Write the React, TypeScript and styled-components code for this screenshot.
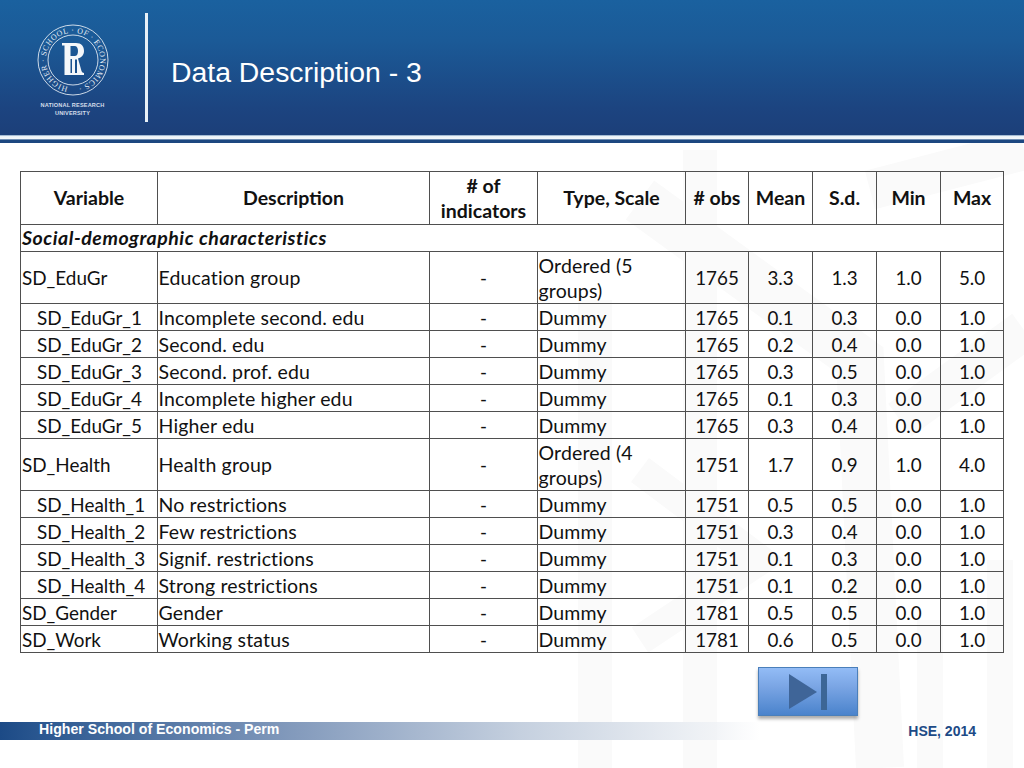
import React from "react";
import styled, { createGlobalStyle } from "styled-components";

const Global = createGlobalStyle`
  html, body { margin: 0; padding: 0; background: #fff; }
  #root { width: 1024px; height: 768px; overflow: hidden; }
`;

const Page = styled.div`
  position: relative;
  width: 1024px;
  height: 768px;
  display: flex;
  flex-direction: column;
  background: #fff;
  overflow: hidden;
`;

const Watermark = styled.svg`
  position: absolute;
  left: 0;
  top: 0;
  width: 1024px;
  height: 768px;
  pointer-events: none;
`;

const Header = styled.header`
  position: relative;
  height: 135px;
  flex: none;
  display: flex;
  align-items: flex-start;
  background: linear-gradient(180deg, #1a619f 0%, #1b5a97 30%, #1c4480 80%, #1c3f79 100%);
`;

const LogoBlock = styled.div`
  width: 145px;
  flex: none;
  display: flex;
  flex-direction: column;
  align-items: center;
  padding-top: 24px;
`;

const LogoCaption = styled.div`
  margin-top: 5px;
  font: bold 5.6px/8px "Liberation Sans", Arial, sans-serif;
  color: #d4deea;
  text-align: center;
  letter-spacing: 0.15px;
`;

const Divider = styled.div`
  width: 3px;
  height: 109px;
  margin-top: 13px;
  flex: none;
  background: #e8f0f7;
`;

const Title = styled.h1`
  margin: 55px 0 0 23px;
  font: normal 28.4px/34px "Liberation Sans", Arial, sans-serif;
  color: #fff;
`;

const HeaderRule = styled.div`
  position: relative;
  height: 8px;
  flex: none;
  background: linear-gradient(180deg, #5f86b0 0, #e9f1f8 1px, #f4f8fb 4px, #6f8fb5 4.5px, #1c4780 5px, #1c4780 100%);
`;

const Main = styled.main`
  position: relative;
  flex: 1;
  display: flex;
  flex-direction: column;
  padding: 28px 20px 0;
`;

const Table = styled.table`
  width: 984px;
  table-layout: fixed;
  border-collapse: collapse;
  font-family: Lato, "Open Sans", sans-serif;
  font-size: 19.5px;
  color: #111;
`;

const Head = styled.th`
  border: 1px solid #4f4f4f;
  padding: 0 2px 1px;
  height: 51px;
  font-weight: 700;
  line-height: 25px;
  text-align: center;
  vertical-align: middle;
`;

const Section = styled.td`
  border: 1px solid #4f4f4f;
  padding: 0 1px 1px;
  height: 25px;
  font-weight: 700;
  font-style: italic;
  line-height: 25px;
  letter-spacing: 0.55px;
`;

const Cell = styled.td<{ $h: number }>`
  border: 1px solid #4f4f4f;
  padding: 0 1px 0 0.5px;
  height: ${p => p.$h}px;
  line-height: 25px;
  text-align: left;
  vertical-align: middle;
  letter-spacing: 0.15px;
`;

const NameCell = styled(Cell)<{ $indent?: boolean }>`
  padding-left: ${p => (p.$indent ? 16 : 1)}px;
  font-size: 18.9px;
  letter-spacing: 0;
  white-space: nowrap;
`;

const NumCell = styled(Cell)`
  padding: 0;
  font-size: 18.8px;
  letter-spacing: 0;
  text-align: center;
`;

const NavRow = styled.div`
  display: flex;
  justify-content: flex-end;
  padding: 14px 146px 0 0;
`;

const NextButton = styled.button`
  width: 100px;
  height: 49px;
  padding: 0;
  border: 1px solid #4a7fba;
  background: linear-gradient(180deg, #93bcf6 0%, #7aa5e4 40%, #4a83cc 100%);
  box-shadow: 0 3px 3px rgba(70, 70, 70, 0.45);
  display: flex;
  align-items: center;
  justify-content: center;
`;

const Footer = styled.footer`
  position: absolute;
  left: 0;
  top: 722px;
  width: 1024px;
  height: 18px;
  display: flex;
  justify-content: space-between;
  align-items: center;
  background: linear-gradient(90deg, #1c4a86 0, #2a5790 40px, #7f97ba 280px, #c5d0df 520px, #eef1f5 700px, rgba(255, 255, 255, 0) 760px);
`;

const FooterLeft = styled.span`
  margin-left: 39px;
  font: bold 14.15px/14px "Liberation Sans", Arial, sans-serif;
  color: #fff;
  position: relative;
  top: -2px;
`;

const FooterRight = styled.span`
  margin-right: 48px;
  font: bold 14px/14px "Liberation Sans", Arial, sans-serif;
  color: #1c4a86;
`;

type Row = { v: string; d: string; t: string; n: string; m: string; s: string; a: string; b: string; indent: boolean; h: number };

const mk = (v: string, d: string, t: string, n: string, m: string, s: string, a: string, b: string, indent = false, h = 26): Row => ({ v, d, t, n, m, s, a, b, indent, h });

const rows: Row[] = [
  mk("SD_EduGr", "Education group", "Ordered (5 groups)", "1765", "3.3", "1.3", "1.0", "5.0", false, 51),
  mk("SD_EduGr_1", "Incomplete second. edu", "Dummy", "1765", "0.1", "0.3", "0.0", "1.0", true),
  mk("SD_EduGr_2", "Second. edu", "Dummy", "1765", "0.2", "0.4", "0.0", "1.0", true),
  mk("SD_EduGr_3", "Second. prof. edu", "Dummy", "1765", "0.3", "0.5", "0.0", "1.0", true),
  mk("SD_EduGr_4", "Incomplete higher edu", "Dummy", "1765", "0.1", "0.3", "0.0", "1.0", true),
  mk("SD_EduGr_5", "Higher edu", "Dummy", "1765", "0.3", "0.4", "0.0", "1.0", true),
  mk("SD_Health", "Health group", "Ordered (4 groups)", "1751", "1.7", "0.9", "1.0", "4.0", false, 51),
  mk("SD_Health_1", "No restrictions", "Dummy", "1751", "0.5", "0.5", "0.0", "1.0", true),
  mk("SD_Health_2", "Few restrictions", "Dummy", "1751", "0.3", "0.4", "0.0", "1.0", true),
  mk("SD_Health_3", "Signif. restrictions", "Dummy", "1751", "0.1", "0.3", "0.0", "1.0", true),
  mk("SD_Health_4", "Strong restrictions", "Dummy", "1751", "0.1", "0.2", "0.0", "1.0", true),
  mk("SD_Gender", "Gender", "Dummy", "1781", "0.5", "0.5", "0.0", "1.0"),
  mk("SD_Work", "Working status", "Dummy", "1781", "0.6", "0.5", "0.0", "1.0"),
];

const widths = [137, 272, 108, 148, 63, 64, 64, 64, 63];
const heads = ["Variable", "Description", "# of indicators", "Type, Scale", "# obs", "Mean", "S.d.", "Min", "Max"];

function Logo() {
  return (
    <svg width="72" height="72" viewBox="0 0 72 72">
      <defs>
        <path id="ring" d="M36 63.2 a27.2 27.2 0 1 1 0 -54.4 a27.2 27.2 0 1 1 0 54.4" />
      </defs>
      <circle cx="36" cy="36" r="35" fill="none" stroke="#dfe8f1" strokeWidth="0.9" />
      <circle cx="36" cy="36" r="25" fill="none" stroke="#dfe8f1" strokeWidth="0.9" />
      <text fontFamily="'Liberation Serif', serif" fontSize="8" fill="#e4ecf4" textLength="160">
        <textPath href="#ring" startOffset="3%" textLength="160" lengthAdjust="spacing">HIGHER · SCHOOL · OF · ECONOMICS ·</textPath>
      </text>
      <path
        fillRule="evenodd"
        d="M25 19H39C44.5 19 47 22.5 47 27C47 31 44.5 33.5 41 34.5L44.5 47C45 48.3 45.8 49 47 49V51H27.5V21.5H25ZM33.5 22H37.5C40 22 41 24 41 27C41 30 40 32 37.5 32H33.5ZM33.5 35V49H35V35ZM38 35.5V49H40V35.5Z"
        fill="#f4f7fa"
      />
    </svg>
  );
}

export default function App() {
  return (
    <Page>
      <Global />
      <Watermark viewBox="0 0 1024 768">
        <g fill="none" stroke="#fafafa" strokeWidth="34">
          <path d="M595 768V300" />
          <path d="M700 768V150" />
          <path d="M640 200L860 360L880 768" strokeWidth="48" />
          <path d="M870 190L1024 150" strokeWidth="40" />
          <path d="M900 420L1024 330" strokeWidth="40" />
          <path d="M640 470L760 560L640 640" strokeWidth="30" />
          <path d="M930 768V620" strokeWidth="26" />
          <path d="M1000 768V560" strokeWidth="26" />
        </g>
      </Watermark>
      <Header>
        <LogoBlock>
          <Logo />
          <LogoCaption>
            NATIONAL RESEARCH
            <br />
            UNIVERSITY
          </LogoCaption>
        </LogoBlock>
        <Divider />
        <Title>Data Description - 3</Title>
      </Header>
      <HeaderRule />
      <Main>
        <Table>
          <colgroup>
            {widths.map((w, i) => (
              <col key={i} width={w} />
            ))}
          </colgroup>
          <thead>
            <tr>
              {heads.map(h => (
                <Head key={h}>{h}</Head>
              ))}
            </tr>
          </thead>
          <tbody>
            <tr>
              <Section colSpan={9}>Social-demographic characteristics</Section>
            </tr>
            {rows.map(r => (
              <tr key={r.v}>
                <NameCell $h={r.h} $indent={r.indent}>{r.v}</NameCell>
                <Cell $h={r.h}>{r.d}</Cell>
                <NumCell $h={r.h}>-</NumCell>
                <Cell $h={r.h}>{r.t}</Cell>
                <NumCell $h={r.h}>{r.n}</NumCell>
                <NumCell $h={r.h}>{r.m}</NumCell>
                <NumCell $h={r.h}>{r.s}</NumCell>
                <NumCell $h={r.h}>{r.a}</NumCell>
                <NumCell $h={r.h}>{r.b}</NumCell>
              </tr>
            ))}
          </tbody>
        </Table>
        <NavRow>
          <NextButton aria-label="Next">
            <svg width="38" height="36" viewBox="0 0 38 36">
              <path d="M0 0L28 18L0 35z" fill="#3f6598" />
              <rect x="32" y="0" width="6" height="36" fill="#3c6696" />
            </svg>
          </NextButton>
        </NavRow>
      </Main>
      <Footer>
        <FooterLeft>Higher School of Economics - Perm</FooterLeft>
        <FooterRight>HSE, 2014</FooterRight>
      </Footer>
    </Page>
  );
}
